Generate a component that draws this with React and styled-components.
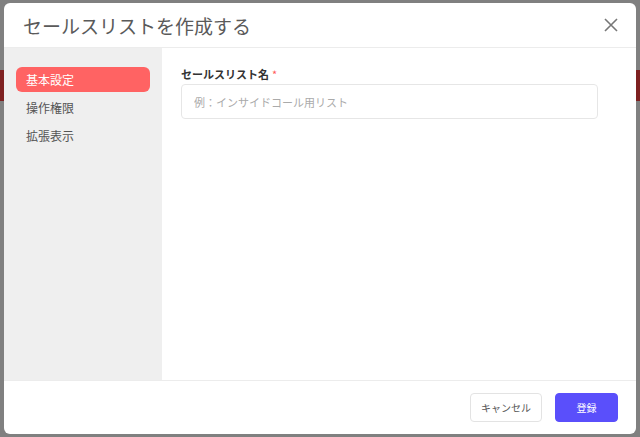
import styled, { createGlobalStyle } from "styled-components";

const GlobalStyle = createGlobalStyle`
  html, body {
    margin: 0;
    padding: 0;
    width: 640px;
    height: 437px;
    overflow: hidden;
    font-family: "Noto Sans CJK JP", "Noto Sans", sans-serif;
  }
`;

const Backdrop = styled.div`
  position: relative;
  width: 640px;
  height: 437px;
  background: #808080;
  display: flex;
  flex-direction: column;
  padding: 3px 4px;
  box-sizing: border-box;
`;

const Band = styled.div`
  position: absolute;
  left: 0;
  right: 0;
  top: 70px;
  height: 31px;
  background: #7e2121;
`;

const Modal = styled.div`
  position: relative;
  flex: 1;
  background: #fff;
  border-radius: 6px;
  display: flex;
  flex-direction: column;
  overflow: hidden;
`;

const Header = styled.div`
  height: 44px;
  display: flex;
  align-items: center;
  justify-content: space-between;
  padding: 0 16px 0 19px;
  border-bottom: 1px solid #ececec;
`;

const Title = styled.h2`
  margin: 0;
  font-size: 19px;
  font-weight: 400;
  color: #5a5a5a;
  letter-spacing: 0;
`;

const CloseButton = styled.button`
  border: none;
  background: none;
  padding: 0;
  width: 18px;
  height: 18px;
  display: flex;
  align-items: center;
  justify-content: center;
  cursor: pointer;
`;

const Body = styled.div`
  flex: 1;
  display: flex;
`;

const Sidebar = styled.nav`
  width: 158px;
  background: #efefef;
  padding: 19px 12px 0 12px;
  box-sizing: border-box;
  display: flex;
  flex-direction: column;
  gap: 3px;
`;

const NavItem = styled.div`
  height: 25px;
  display: flex;
  align-items: center;
  padding: 0 10px;
  border-radius: 6px;
  font-size: 12px;
  color: ${(p) => (p.$active ? "#fff" : "#555")};
  background: ${(p) => (p.$active ? "#ff6363" : "transparent")};
`;

const Content = styled.div`
  flex: 1;
  padding: 18px 38px 0 19px;
`;

const Label = styled.div`
  font-size: 11px;
  font-weight: 700;
  color: #333;
  margin-bottom: 2px;
  display: flex;
  align-items: center;
  gap: 3px;
  line-height: 16px;
`;

const Required = styled.span`
  color: #ff5a5a;
  font-weight: 400;
  font-size: 11px;
`;

const Input = styled.input`
  width: 100%;
  box-sizing: border-box;
  height: 35px;
  border: 1px solid #e6e6e6;
  border-radius: 4px;
  padding: 0 12px;
  font-family: inherit;
  font-size: 11px;
  outline: none;

  &::placeholder {
    color: #aaa;
  }
`;

const Footer = styled.div`
  height: 53px;
  border-top: 1px solid #ececec;
  display: flex;
  align-items: center;
  justify-content: flex-end;
  gap: 13px;
  padding: 0 18px;
`;

const Button = styled.button`
  height: 29px;
  width: ${(p) => (p.$primary ? "63px" : "72px")};
  padding: 0;
  border-radius: 4px;
  font-family: inherit;
  font-size: 10px;
  cursor: pointer;
  border: 1px solid ${(p) => (p.$primary ? "#5a4ffb" : "#e3e3e3")};
  background: ${(p) => (p.$primary ? "#5a4ffb" : "#fff")};
  color: ${(p) => (p.$primary ? "#fff" : "#555")};
`;

const App = () => {
  return (
    <>
      <GlobalStyle />
      <Backdrop>
        <Band />
        <Modal>
          <Header>
            <Title>セールスリストを作成する</Title>
            <CloseButton aria-label="close">
              <svg width="16" height="16" viewBox="0 0 16 16">
                <path
                  d="M2 2 L14 14 M14 2 L2 14"
                  stroke="#777"
                  strokeWidth="1.6"
                  fill="none"
                />
              </svg>
            </CloseButton>
          </Header>
          <Body>
            <Sidebar>
              <NavItem $active>基本設定</NavItem>
              <NavItem>操作権限</NavItem>
              <NavItem>拡張表示</NavItem>
            </Sidebar>
            <Content>
              <Label>
                セールスリスト名<Required>*</Required>
              </Label>
              <Input placeholder="例：インサイドコール用リスト" />
            </Content>
          </Body>
          <Footer>
            <Button>キャンセル</Button>
            <Button $primary>登録</Button>
          </Footer>
        </Modal>
      </Backdrop>
    </>
  );
};

export default App;
